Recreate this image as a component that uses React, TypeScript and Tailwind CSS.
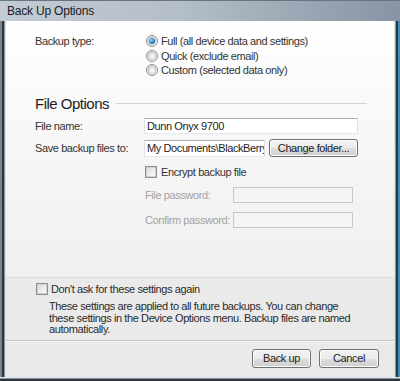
import React from "react";

const font = { fontFamily: '"Liberation Sans", Arial, sans-serif' };

function Radio({ checked }: { checked?: boolean }) {
  return (
    <span className="relative inline-flex h-[12px] w-[12px] shrink-0 items-center justify-center rounded-full border border-[#8d8d8d] bg-[linear-gradient(135deg,#dcdcdc,#f8f8f8)]">
      <span className="h-[8px] w-[8px] rounded-full border border-[#c4c4c4] bg-[linear-gradient(135deg,#e4e4e4,#ffffff)] flex items-center justify-center">
        {checked && (
          <span className="h-[6px] w-[6px] rounded-full bg-[radial-gradient(circle_at_40%_35%,#8fd3ff,#1d7fc8_60%,#0b4f8a)]" />
        )}
      </span>
    </span>
  );
}

function Check() {
  return (
    <span className="inline-flex h-[12px] w-[12px] shrink-0 items-center justify-center border border-[#8e8e8e] bg-white">
      <span className="h-[10px] w-[10px] border border-[#d0d0d0] bg-[linear-gradient(135deg,#dcdcdc,#fbfbfb)]" />
    </span>
  );
}

function Button({ children, w, h }: { children: React.ReactNode; w: string; h: string }) {
  return (
    <div
      className={`${w} ${h} flex items-center justify-center rounded-[3px] border border-[#707070] bg-[linear-gradient(#f2f2f2_0%,#ebebeb_50%,#dddddd_51%,#cfcfcf_100%)] text-[#222] shadow-[inset_0_0_0_1px_#fcfcfc]`}
    >
      {children}
    </div>
  );
}

export default function App() {
  return (
    <div
      className="flex h-[381px] w-[400px] flex-col overflow-hidden bg-[#2e343c] text-[11px] tracking-[-0.4px] text-[#333]"
      style={font}
    >
      {/* title bar */}
      <div className="flex h-[21px] items-center border-t border-[#6a7480] bg-[linear-gradient(90deg,#c3cbd4_0%,#b4bec9_45%,#8794a3_100%)] pl-[7px] text-[12px] tracking-[-0.2px] text-[#1b1b1b]">
        Back Up Options
      </div>
      <div className="flex flex-1">
        {/* left frame */}
        <div className="flex w-[6px]">
          <div className="w-[2px] bg-[#7a8591]" />
          <div className="w-[2px] bg-[#2f353d]" />
          <div className="w-[1px] bg-[#8d97a2]" />
          <div className="w-[1px] bg-[#dfe3e7]" />
        </div>
        {/* content */}
        <div className="flex w-[388px] flex-col bg-[#eaeaea]">
          <div className="flex h-[256px] flex-col bg-[linear-gradient(#ffffff_0%,#f8f8f8_40%,#efefef_100%)] pl-[29px] pr-[27px]">
            {/* backup type */}
            <div className="mt-[13px] flex">
              <div className="w-[111px] leading-[14.5px]">Backup type:</div>
              <div className="flex flex-col">
                <div className="flex h-[14.5px] items-center gap-[3px]">
                  <Radio checked />
                  <span>Full (all device data and settings)</span>
                </div>
                <div className="flex h-[14.5px] items-center gap-[3px]">
                  <Radio />
                  <span>Quick (exclude email)</span>
                </div>
                <div className="flex h-[14.5px] items-center gap-[3px]">
                  <Radio />
                  <span>Custom (selected data only)</span>
                </div>
              </div>
            </div>
            {/* File Options heading */}
            <div className="mt-[17px] flex h-[18px] items-center">
              <span className="text-[15px] leading-[18px] tracking-[-0.5px] text-[#1e1e1e]">File Options</span>
              <div className="ml-[7px] h-px flex-1 bg-[#d4d4d4]" />
            </div>
            {/* file name */}
            <div className="mt-[5.5px] flex h-[16px] items-center">
              <div className="w-[109px]">File name:</div>
              <div className="flex h-[16px] w-[214px] items-center border border-[#abadb3] border-x-[#dbdfe6] border-b-[#e3e9ef] bg-white pl-[2px] text-[#1e1e1e]">
                Dunn Onyx 9700
              </div>
            </div>
            {/* save to */}
            <div className="mt-[5px] flex h-[18px] items-center">
              <div className="w-[109px]">Save backup files to:</div>
              <div className="h-[17px] w-[121px] overflow-hidden border border-[#abadb3] border-x-[#dbdfe6] border-b-[#e3e9ef] bg-white pl-[2px] text-[#1e1e1e]">
                <div className="w-[300px] leading-[15px]">My Documents\BlackBerry\Backup</div>
              </div>
              <div className="ml-[4px]">
                <Button w="w-[89px]" h="h-[18px]">Change folder...</Button>
              </div>
            </div>
            {/* encrypt */}
            <div className="mt-[9px] flex h-[12px] items-center gap-[4px] pl-[110px]">
              <Check />
              <span>Encrypt backup file</span>
            </div>
            <div className="mt-[9px] flex h-[16px] items-center pl-[110px] text-[#a3a3a3]">
              <div className="w-[88px]">File password:</div>
              <div className="h-[16px] w-[120px] border border-[#c8c8c8] bg-[#f4f4f4]" />
            </div>
            <div className="mt-[9px] flex h-[16px] items-center pl-[110px] text-[#a3a3a3]">
              <div className="w-[88px]">Confirm password:</div>
              <div className="h-[16px] w-[120px] border border-[#c8c8c8] bg-[#f4f4f4]" />
            </div>
          </div>
          <div className="h-px bg-[#d8d8d8]" />
          {/* bottom info */}
          <div className="flex h-[62px] flex-col pl-[30px] pr-[10px]">
            <div className="mt-[5px] flex h-[12px] items-center gap-[3px]">
              <Check />
              <span className="text-[#2b2b2b]">Don&apos;t ask for these settings again</span>
            </div>
            <p className="mt-[6px] w-[322px] pl-[13px] leading-[11.5px] text-[#2b2b2b]">
              These settings are applied to all future backups. You can change these settings in the Device Options menu. Backup files are named automatically.
            </p>
          </div>
          <div className="h-px bg-[#c6c6c6]" />
          <div className="h-px bg-[#f4f4f4]" />
          <div className="flex flex-1 items-start justify-end gap-[8px] pr-[15px] pt-[7px]">
            <Button w="w-[59px]" h="h-[19px]">Back up</Button>
            <Button w="w-[60px]" h="h-[19px]">Cancel</Button>
          </div>
        </div>
        {/* right frame */}
        <div className="flex w-[6px]">
          <div className="w-[1px] bg-[#dfe3e7]" />
          <div className="w-[1px] bg-[#8d97a2]" />
          <div className="w-[2px] bg-[#2f353d]" />
          <div className="w-[2px] bg-[#3a8fc0]" />
        </div>
      </div>
      {/* bottom frame */}
      <div className="flex h-[4px] flex-col">
        <div className="h-px bg-[#dfe3e7]" />
        <div className="h-px bg-[#8d97a2]" />
        <div className="h-[2px] bg-[#2f353d]" />
      </div>
    </div>
  );
}
